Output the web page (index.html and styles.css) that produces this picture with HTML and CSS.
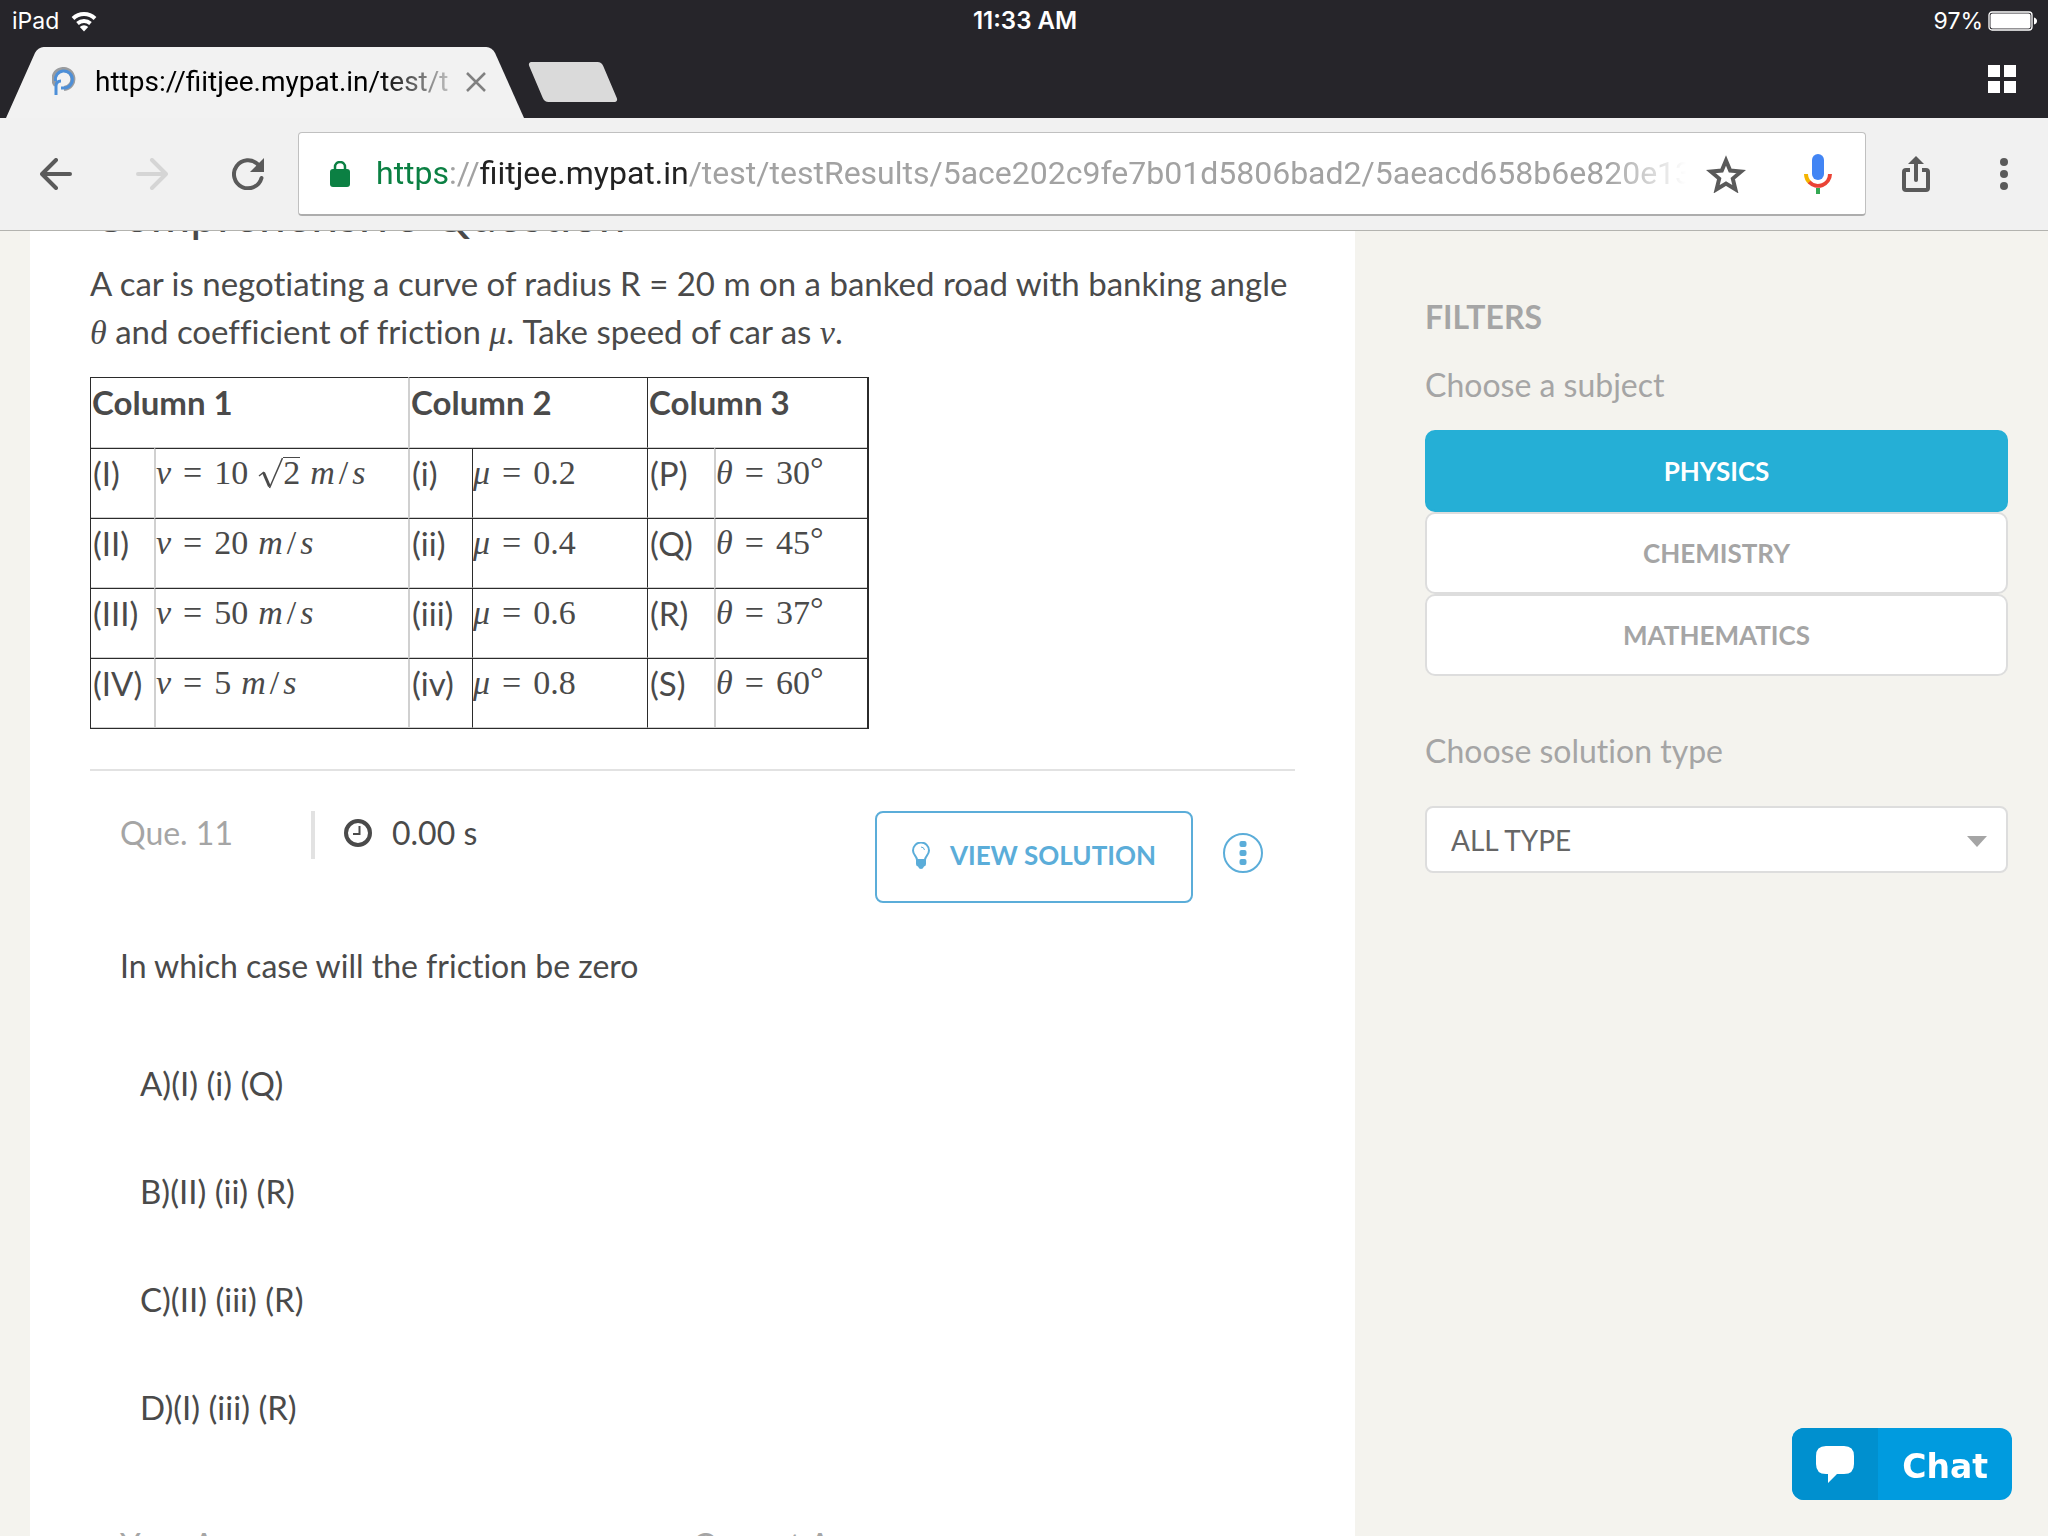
FILE: index.html
```html
<!DOCTYPE html>
<html lang="en">
<head>
    <meta charset="UTF-8">
    <meta name="viewport" content="width=device-width, initial-scale=1.0">
    <title>Test Results</title>
    <link rel="stylesheet" href="styles.css">
</head>
<body>

<header class="browser">
    <div class="status-bar">
        <div class="status-left">
            <span>iPad</span>
            <svg width="26" height="24" viewBox="0 0 26 24" fill="none" stroke="#fff" stroke-width="4">
                <path d="M2 9.5a16 16 0 0 1 22 0"/>
                <path d="M6.500 14.500a10 10 0 0 1 13 0"/>
                <path d="M13 22.500l-4.200-4.500a6 6 0 0 1 8.400 0z" fill="#fff" stroke="none"/>
            </svg>
        </div>
        <b class="clock">11:33 AM</b>
        <div class="status-right">
            <span>97%</span>
            <svg width="50" height="20" viewBox="0 0 50 20">
                <rect x="1" y="1" width="43" height="18" rx="3" fill="none" stroke="#fff" stroke-width="1.300"/>
                <rect x="2.500" y="2.500" width="40" height="15" rx="2" fill="#fff"/>
                <path d="M46 6.500q3 1 3 3.500t-3 3.500z" fill="#fff"/>
            </svg>
        </div>
    </div>

    <div class="tab-strip">
        <div class="tab">
            <svg class="favicon" width="24" height="30" viewBox="0 0 24 30" fill="none">
                <path d="M4 18a9.500 9.500 0 1 1 8 3.500" stroke="#9a9c9f" stroke-width="5"/>
                <path d="M4 28V19q0-5 5-5M3.500 14a8.500 8.500 0 1 1 8.500 7H9" stroke="#4d8fd8" stroke-width="3"/>
            </svg>
            <span class="tab-title">https://fiitjee.mypat.in/test/t</span>
            <button class="icon-button" aria-label="Close tab">
                <svg width="20" height="20" viewBox="0 0 20 20" stroke="#818181" stroke-width="2.500"><path d="M1 1l18 18M19 1L1 19"/></svg>
            </button>
        </div>
        <button class="new-tab" aria-label="New tab"></button>
        <button class="icon-button tab-grid" aria-label="Show all tabs">
            <svg width="28" height="28" viewBox="0 0 28 28" fill="#fff"><path d="M0 0h12v12H0zM16 0h12v12H16zM0 16h12v12H0zM16 16h12v12H16z"/></svg>
        </button>
    </div>

    <div class="toolbar">
        <div class="nav-buttons">
            <button class="icon-button" aria-label="Back">
                <svg width="32" height="32" viewBox="0 0 32 32" fill="none" stroke="#5a5a5a" stroke-width="4" stroke-linecap="round" stroke-linejoin="round"><path d="M30 16H3M16 2L2 16l14 14"/></svg>
            </button>
            <button class="icon-button" aria-label="Forward">
                <svg width="32" height="32" viewBox="0 0 32 32" fill="none" stroke="#d5d5d5" stroke-width="4" stroke-linecap="round" stroke-linejoin="round"><path d="M2 16h27M16 2l14 14-14 14"/></svg>
            </button>
            <button class="icon-button" aria-label="Reload">
                <svg width="32" height="32" viewBox="0 0 32 32"><path d="M26 6.500A14 14 0 1 0 29.500 20" fill="none" stroke="#5a5a5a" stroke-width="4" stroke-linecap="round"/><path d="M32 0v14H18z" fill="#5a5a5a"/></svg>
            </button>
        </div>
        <div class="omnibox">
            <svg width="20" height="26" viewBox="0 0 20 26"><rect y="8" width="20" height="18" rx="3" fill="#0b8043"/><path d="M5 9V6a5 5 0 0 1 10 0v3" fill="none" stroke="#0b8043" stroke-width="2.500"/></svg>
            <div class="url" role="textbox" aria-label="Address"><span class="scheme">https</span>://<span class="host">fiitjee.mypat.in</span>/test/testResults/5ace202c9fe7b01d5806bad2/5aeacd658b6e820e13</div>
            <button class="icon-button star" aria-label="Bookmark">
                <svg width="40" height="38" viewBox="0 0 40 38" fill="none" stroke="#5a5a5a" stroke-width="4"><path d="M20 5.500l4.200 10.100 10.900.9-8.300 7.100 2.600 10.700L20 28.600l-9.400 5.700 2.600-10.700-8.300-7.100 10.900-.9z"/></svg>
            </button>
            <button class="icon-button" aria-label="Voice search">
                <svg width="28" height="40" viewBox="0 0 28 40" fill="none" stroke-width="4">
                    <rect x="8" y="0" width="12" height="26" rx="6" fill="#4285f4"/>
                    <path d="M2 20a12 12 0 0 0 4 8.800" stroke="#f4b400"/>
                    <path d="M5.200 28A12 12 0 0 0 26 20" stroke="#ea4335"/>
                    <path d="M14 34v6" stroke="#34a853"/>
                </svg>
            </button>
        </div>
        <button class="icon-button share" aria-label="Share">
            <svg width="28" height="36" viewBox="0 0 28 36" fill="none" stroke="#5a5a5a" stroke-width="4"><path d="M8 14H4q-2 0-2 2v16q0 2 2 2h20q2 0 2-2V16q0-2-2-2h-4"/><path d="M14 24V6" stroke-linecap="round"/><path d="M14 0l8 8H6z" fill="#5a5a5a" stroke="none"/></svg>
        </button>
        <button class="icon-button" aria-label="Menu">
            <svg width="8" height="32" viewBox="0 0 8 32" fill="#5a5a5a"><circle cx="4" cy="4" r="4"/><circle cx="4" cy="16" r="4"/><circle cx="4" cy="28" r="4"/></svg>
        </button>
    </div>
</header>

<div class="page">
    <main class="card">
        <h1>Comprehensive Question</h1>
        <p>A car is negotiating a curve of radius R = 20 m on a banked road with banking angle <var>θ</var> and coefficient of friction <var>μ</var>. Take speed of car as <var>v</var>.</p>

        <table class="columns">
            <colgroup>
                <col class="c1"><col class="c2"><col class="c3"><col class="c4"><col class="c5"><col class="c6">
            </colgroup>
            <thead>
                <tr>
                    <th colspan="2">Column 1</th>
                    <th colspan="2">Column 2</th>
                    <th colspan="2" class="dark">Column 3</th>
                </tr>
            </thead>
            <tbody>
                <tr>
                    <td>(I)</td>
                    <td class="math"><var>v</var><span class="rel">=</span>10<svg class="radical" width="25" height="32" viewBox="0 0 25 32" fill="none" stroke="#4a4a4a"><path d="M1 19l5-4" stroke-width="1.500"/><path d="M5.500 15.500l6 14" stroke-width="3"/><path d="M11.500 31L24.500 1" stroke-width="1.500"/></svg><span class="root">2</span><span class="unit"><var>m</var><span class="slash">/</span><var>s</var></span></td>
                    <td>(i)</td>
                    <td class="math dark"><var>μ</var><span class="rel">=</span>0.2</td>
                    <td class="dark">(P)</td>
                    <td class="math"><var>θ</var><span class="rel">=</span>30<span class="degree">°</span></td>
                </tr>
                <tr>
                    <td>(II)</td>
                    <td class="math"><var>v</var><span class="rel">=</span>20<span class="unit"><var>m</var><span class="slash">/</span><var>s</var></span></td>
                    <td>(ii)</td>
                    <td class="math dark"><var>μ</var><span class="rel">=</span>0.4</td>
                    <td class="dark">(Q)</td>
                    <td class="math"><var>θ</var><span class="rel">=</span>45<span class="degree">°</span></td>
                </tr>
                <tr>
                    <td>(III)</td>
                    <td class="math"><var>v</var><span class="rel">=</span>50<span class="unit"><var>m</var><span class="slash">/</span><var>s</var></span></td>
                    <td>(iii)</td>
                    <td class="math dark"><var>μ</var><span class="rel">=</span>0.6</td>
                    <td class="dark">(R)</td>
                    <td class="math"><var>θ</var><span class="rel">=</span>37<span class="degree">°</span></td>
                </tr>
                <tr>
                    <td>(IV)</td>
                    <td class="math"><var>v</var><span class="rel">=</span>5<span class="unit"><var>m</var><span class="slash">/</span><var>s</var></span></td>
                    <td>(iv)</td>
                    <td class="math dark"><var>μ</var><span class="rel">=</span>0.8</td>
                    <td class="dark">(S)</td>
                    <td class="math"><var>θ</var><span class="rel">=</span>60<span class="degree">°</span></td>
                </tr>
            </tbody>
        </table>

        <hr>

        <section class="question">
            <div class="question-bar">
                <span class="number">Que. 11</span>
                <span class="time">
                    <svg width="28" height="28" viewBox="0 0 28 28" fill="none" stroke="#4a4a4a"><circle cx="14" cy="14" r="12" stroke-width="4"/><path d="M15.500 7v8H9" stroke-width="2"/></svg>
                    0.00 s
                </span>
                <button class="view-solution">
                    <svg width="18" height="27" viewBox="0 0 18 27"><path d="M5 18C5 14 1 13 1 8.500a8 8 0 0 1 16 0C17 13 13 14 13 18z" fill="none" stroke="#5badd9" stroke-width="2"/><path d="M9 5q3 0 3.500 3" fill="none" stroke="#5badd9"/><path d="M4 18h10v4q0 2-2 2.500Q11 27 9 27t-3-2.500Q4 24 4 22z" fill="#5badd9"/></svg>
                    VIEW SOLUTION
                </button>
                <button class="more" aria-label="More options">
                    <svg width="8" height="24" viewBox="0 0 8 24" fill="#5badd9"><rect width="7" height="6" y="0" x="0.500" rx="2"/><rect width="7" height="6" y="9" x="0.500" rx="2"/><rect width="7" height="6" y="18" x="0.500" rx="2"/></svg>
                </button>
            </div>

            <p>In which case will the friction be zero</p>

            <ul class="options">
                <li>A)(I) (i) (Q)</li>
                <li>B)(II) (ii) (R)</li>
                <li>C)(II) (iii) (R)</li>
                <li>D)(I) (iii) (R)</li>
            </ul>

            <div class="answers">
                <span>Your Answer</span>
                <span>Correct Answer</span>
            </div>
        </section>
    </main>

    <aside class="filters">
        <h2>FILTERS</h2>
        <h3>Choose a subject</h3>
        <div class="subjects">
            <button class="active">PHYSICS</button>
            <button>CHEMISTRY</button>
            <button>MATHEMATICS</button>
        </div>
        <label for="solutionType">Choose solution type</label>
        <div class="select-box">
            <select id="solutionType">
                <option>ALL TYPE</option>
            </select>
        </div>
    </aside>
</div>

<button class="chat">
    <span class="chat-icon">
        <svg width="38" height="37" viewBox="0 0 38 37" fill="#fff"><path d="M10 0h18q10 0 10 10v8q0 10-10 10h-7l-9 9v-9h-2Q0 28 0 18v-8Q0 0 10 0z"/></svg>
    </span>
    <span class="chat-text">Chat</span>
</button>

</body>
</html>
```

FILE: styles.css
```css
* {
    box-sizing: border-box;
}
body {
    margin: 0;
    height: 100vh;
    overflow: hidden;
    display: flex;
    flex-direction: column;
    background-color: #f4f3ee;
    color: #4a4a4a;
    font-family: Lato, sans-serif;
    font-size: 32px;
    line-height: 48px;
    font-variant-ligatures: none;
}
button {
    font-family: inherit;
    cursor: pointer;
}
svg {
    display: block;
    flex: none;
}
.icon-button {
    padding: 0;
    border: none;
    background: none;
}

/* Browser bars */
.browser {
    position: relative;
    z-index: 1;
    flex: none;
    background-color: #26252a;
    font-family: Roboto, sans-serif;
    font-variant-ligatures: normal;
}
.status-bar {
    display: grid;
    grid-template-columns: 1fr auto 1fr;
    align-items: center;
    height: 41px;
    padding: 0 10px 0 12px;
    color: #fff;
    font-family: Inter, sans-serif;
    font-size: 23px;
    line-height: 42px;
}
.status-left,
.status-right {
    display: flex;
    align-items: center;
    gap: 12px;
}
.status-right {
    justify-content: flex-end;
    gap: 5px;
}
.clock {
    font-size: 24px;
    font-weight: 600;
}
.tab-strip {
    display: flex;
    align-items: center;
    height: 77px;
    padding: 6px 32px 0 6px;
}
.tab {
    position: relative;
    z-index: 0;
    display: flex;
    align-items: center;
    width: 518px;
    height: 71px;
    padding: 0 38px 2px 46px;
}
.tab::before,
.tab::after {
    content: "";
    position: absolute;
    z-index: -1;
    top: 0;
    bottom: 0;
    width: 60%;
    background-color: #f2f2f2;
}
.tab::before {
    left: 0;
    border-top-left-radius: 6px;
    transform: skewX(-24deg);
    transform-origin: bottom;
}
.tab::after {
    right: 0;
    border-top-right-radius: 6px;
    transform: skewX(24deg);
    transform-origin: bottom;
}
.tab-title {
    flex: 1;
    margin: 0 16px 0 19px;
    overflow: hidden;
    white-space: nowrap;
    color: #000;
    font-size: 28px;
    mask-image: linear-gradient(to right, #000 80%, transparent 105%);
}
.new-tab {
    width: 74px;
    height: 40px;
    margin: 0 0 2px 12px;
    border: none;
    border-radius: 4px;
    background-color: #dadada;
    transform: skewX(23deg);
}
.tab-grid {
    margin: 0 0 8px auto;
}
.toolbar {
    display: flex;
    align-items: center;
    height: 113px;
    padding: 0 40px;
    border-bottom: 1px solid #b3b3af;
    background-color: #f1f1f1;
}
.nav-buttons {
    display: flex;
    gap: 64px;
    margin-right: 34px;
}
.omnibox {
    flex: 1;
    min-width: 0;
    display: flex;
    align-items: center;
    height: 84px;
    padding: 0 33px 0 31px;
    border: 1px solid #c0c0c0;
    border-bottom: 2px solid #adadad;
    border-radius: 4px;
    background-color: #fff;
}
.url {
    flex: 1;
    min-width: 0;
    margin: 0 20px 0 26px;
    padding-bottom: 2px;
    overflow: hidden;
    white-space: nowrap;
    color: #a2a2a2;
    mask-image: linear-gradient(to right, #000 94%, transparent);
}
.scheme {
    color: #0b8043;
}
.host {
    color: #222;
}
.star {
    margin-right: 58px;
}
.share {
    margin: 0 70px 0 36px;
}

/* Page */
.page {
    flex: 1;
    min-height: 0;
    display: flex;
    overflow: hidden;
}
.card {
    flex: 1;
    margin-left: 30px;
    padding: 0 60px;
    background-color: #fff;
    font-size: 33px;
}
/* Title is scrolled under the toolbar */
h1 {
    margin: -41px 0 21px 2px;
    font-size: 48px;
    font-weight: 400;
    line-height: 48px;
}
p {
    margin: 0;
}
var,
.math {
    font-family: "Liberation Serif", serif;
    font-size: 34px;
}
var {
    line-height: 32px;
}
.columns {
    width: 779px;
    margin-top: 22px;
    border-collapse: separate;
    border-spacing: 0;
    border-right: 2px solid #2b2b2b;
    border-left: 1px solid #2b2b2b;
    border-bottom: 1px solid #2b2b2b;
    table-layout: fixed;
}
.c1 { width: 63px; }
.c2 { width: 254px; }
.c3 { width: 64px; }
.c4 { width: 175px; }
.c5 { width: 67px; }
.c6 { width: 153px; }
.columns th,
.columns td {
    height: 70px;
    padding: 0 0 20px 1px;
    border-top: 1px solid #2b2b2b;
    border-bottom: 1px solid #cfcfcf;
    border-left: 2px solid #d0d0d0;
    text-align: left;
    vertical-align: top;
    white-space: nowrap;
}
.columns th {
    height: 71px;
}
.columns td {
    padding-left: 2px;
}
.columns th:first-child,
.columns td:first-child {
    border-left: none;
}
.columns .dark {
    border-left: 1px solid #2b2b2b;
}
.columns .math {
    padding-left: 0;
}
.rel {
    padding: 0 12px;
}
.unit {
    padding-left: 10px;
}
.slash {
    padding: 0 4px;
}
.radical {
    display: inline-block;
    margin-left: 10px;
    vertical-align: -5px;
}
.root {
    display: inline-block;
    line-height: 30px;
    border-top: 1px solid #4a4a4a;
}
.degree {
    line-height: 32px;
    vertical-align: 4px;
}
hr {
    height: 2px;
    margin: 40px 0;
    border: none;
    background-color: #e2e2e2;
}
.question {
    padding: 0 30px;
}
.question p {
    font-size: 32px;
}
.question-bar {
    display: flex;
    align-items: flex-start;
    margin-bottom: 39px;
    font-size: 32px;
    line-height: 44px;
}
.number {
    width: 195px;
    height: 48px;
    border-right: 4px solid #e2e2e2;
    color: #a5a5a5;
}
.time {
    display: flex;
    align-items: center;
    gap: 20px;
    margin-left: 29px;
}
.view-solution {
    display: flex;
    align-items: center;
    gap: 20px;
    height: 92px;
    margin-left: auto;
    padding: 0 35px 4px;
    border: 2px solid #5badd9;
    border-radius: 8px;
    background-color: #fff;
    color: #5badd9;
    font-size: 26px;
    font-weight: 700;
}
.more {
    display: flex;
    align-items: center;
    justify-content: center;
    width: 40px;
    height: 40px;
    margin: 22px 2px 0 30px;
    padding: 0;
    border: 2px solid #5badd9;
    border-radius: 50%;
    background-color: #fff;
}
.options {
    display: flex;
    flex-direction: column;
    gap: 60px;
    margin: 69px 0 89px;
    padding-left: 20px;
    list-style: none;
}
.answers {
    display: grid;
    grid-template-columns: 1fr 1fr;
    color: #a5a5a5;
}

/* Filters */
.filters {
    flex: none;
    width: 693px;
    padding: 62px 40px 0 70px;
    color: #a5a5a5;
}
.filters h2 {
    margin: 0;
    font-size: 32px;
    font-weight: 700;
}
.filters h3 {
    margin: 20px 0 21px;
    font-size: 32px;
    font-weight: 400;
}
.subjects {
    display: flex;
    flex-direction: column;
    margin-bottom: 51px;
}
.subjects button {
    height: 82px;
    border: 2px solid #dddddd;
    border-radius: 10px;
    background-color: #fff;
    color: #a5a5a5;
    font-size: 26px;
    font-weight: 700;
}
.subjects .active {
    border-color: #25afd6;
    background-color: #25afd6;
    color: #fff;
}
.filters label {
    display: block;
    margin-bottom: 31px;
}
.select-box {
    position: relative;
}
/* Arrow of the drop-down */
.select-box::after {
    content: "";
    position: absolute;
    top: 30px;
    right: 21px;
    border: 10px solid transparent;
    border-top: 11px solid #a5a5a5;
    border-bottom: none;
    pointer-events: none;
}
select {
    appearance: none;
    width: 100%;
    height: 67px;
    padding: 0 24px;
    border: 2px solid #dddddd;
    border-radius: 8px;
    background-color: #fff;
    color: #666;
    font-family: inherit;
    font-size: 28px;
}

/* Chat button */
.chat {
    position: fixed;
    right: 36px;
    bottom: 36px;
    display: flex;
    height: 72px;
    padding: 0;
    overflow: hidden;
    border: none;
    border-radius: 12px;
    background-color: #009bdf;
    color: #fff;
    font-family: "DejaVu Sans", sans-serif;
    font-size: 33px;
    font-weight: 700;
}
.chat-icon {
    display: flex;
    align-items: center;
    width: 86px;
    height: 100%;
    padding-left: 24px;
    background-color: #0090cf;
}
.chat-text {
    padding: 0 24px;
    line-height: 78px;
}
```
